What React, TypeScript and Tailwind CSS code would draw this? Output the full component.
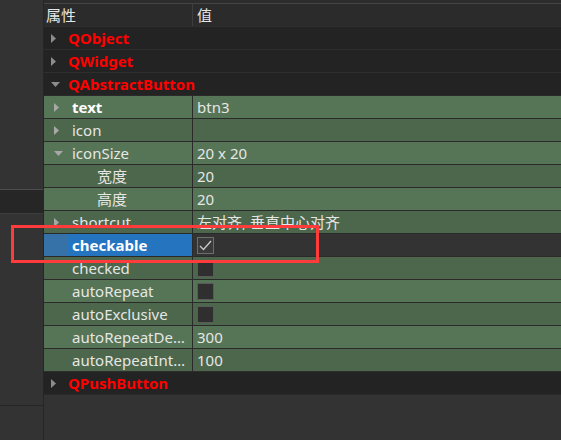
import React from "react";

type Row = {
  name: string;
  cat?: boolean;
  arrow?: "right" | "down";
  bold?: boolean;
  sub?: boolean;
  value?: string;
  check?: boolean;
  selected?: boolean;
};

const rows: Row[] = [
  { name: "QObject", cat: true, arrow: "right" },
  { name: "QWidget", cat: true, arrow: "right" },
  { name: "QAbstractButton", cat: true, arrow: "down" },
  { name: "text", arrow: "right", bold: true, value: "btn3" },
  { name: "icon", arrow: "right", value: "" },
  { name: "iconSize", arrow: "down", value: "20 x 20" },
  { name: "宽度", sub: true, value: "20" },
  { name: "高度", sub: true, value: "20" },
  { name: "shortcut", arrow: "right", value: "左对齐, 垂直中心对齐" },
  { name: "checkable", bold: true, check: true, selected: true },
  { name: "checked", check: false },
  { name: "autoRepeat", check: false },
  { name: "autoExclusive", check: false },
  { name: "autoRepeatDelay", value: "300" },
  { name: "autoRepeatInterval", value: "100" },
  { name: "QPushButton", cat: true, arrow: "right" },
];

function Arrow({ dir, color }: { dir: "right" | "down"; color: string }) {
  if (dir === "down") {
    return (
      <svg width="9" height="5" viewBox="0 0 9 5">
        <path d="M0 0 L9 0 L4.5 5 Z" fill={color} />
      </svg>
    );
  }
  return (
    <svg width="5" height="9" viewBox="0 0 5 9">
      <path d="M0 0 L5 4.5 L0 9 Z" fill={color} />
    </svg>
  );
}

function CheckBox({ on }: { on: boolean }) {
  return (
    <div
      className={
        on
          ? "flex h-[17px] w-[17px] items-center justify-center border border-[#6e6e6e] bg-[#3a3a3a]"
          : "h-[17px] w-[17px] border border-[#5a5a5a] bg-[#2f2f2f]"
      }
    >
      {on && (
        <svg width="13" height="11" viewBox="0 0 13 11">
          <path d="M1 6 L4.5 9.5 L12 1" stroke="#c8c8c8" strokeWidth="1.4" fill="none" />
        </svg>
      )}
    </div>
  );
}

export default function App() {
  let green = 0;
  return (
    <div
      className="relative flex h-[440px] w-[561px] overflow-hidden bg-[#333333] text-[15px] text-[#e6e6e6]"
      style={{ fontFamily: '"Noto Sans", "Noto Sans CJK SC", sans-serif' }}
    >
      {/* left dock strip */}
      <div className="flex w-[44px] shrink-0 flex-col border-r border-[#262626]">
        <div className="h-[189px] bg-[#333333]" />
        <div className="h-[25px] border-y border-t-[#4c4c4c] border-b-[#3c3c3c] bg-[#262626]" />
        <div className="h-[192px] border-b border-[#262626] bg-[#333333]" />
        <div className="flex-1 bg-[#333333]" />
      </div>

      {/* property table */}
      <div className="flex flex-1 flex-col">
        <div className="h-[4px] border-b border-[#444444] bg-[#2c2c2c]" />
        <div className="flex h-[22px] items-center bg-[#2b2b2b] leading-none">
          <div className="flex h-full w-[149px] items-center border-r border-[#3e3e3e] pl-[2px]">属性</div>
          <div className="pl-[4px]">值</div>
        </div>

        {rows.map((r, i) => {
          if (r.cat) {
            return (
              <div key={i} className="flex h-[23px] items-center border-t border-[#2e2e2e] bg-[#232323]">
                <div className="flex w-[24px] items-center pl-[7px]">
                  <Arrow dir={r.arrow!} color="#8c8c8c" />
                </div>
                <span className="font-bold text-[#ff0000]">{r.name}</span>
              </div>
            );
          }
          const light = green % 2 === 0;
          green++;
          const bg = light ? "bg-[#567556]" : "bg-[#4c674c]";
          return (
            <div key={i} className={`flex h-[23px] border-t border-[#2a2a2a] ${r.selected ? "" : bg}`}>
              <div
                className={`flex w-[149px] shrink-0 items-center border-r border-[#2a2a2a] ${
                  r.selected ? "bg-[#2574c0]" : ""
                }`}
              >
                <div
                  className={`flex h-full w-[24px] shrink-0 items-center pl-[10px] ${
                    r.selected ? "bg-[#3671a8]" : ""
                  }`}
                >
                  {r.arrow && <Arrow dir={r.arrow} color="#a8a8a8" />}
                </div>
                <span
                  className={`truncate pl-[4px] pr-[4px] ${r.sub ? "pl-[29px]" : ""} ${
                    r.bold ? "font-bold text-white" : ""
                  }`}
                >
                  {r.name}
                </span>
              </div>
              <div
                className={`flex flex-1 items-center pl-[4px] ${r.selected ? "bg-[#333333]" : ""}`}
              >
                {r.check !== undefined ? <CheckBox on={r.check} /> : <span className="whitespace-nowrap">{r.value}</span>}
              </div>
            </div>
          );
        })}
        <div className="flex-1 border-t border-[#2a2a2a] bg-[#333333]" />
      </div>

      {/* annotation box */}
      <div className="absolute left-[11px] top-[225px] h-[38px] w-[308px] border-[3px] border-[#ff3b3b]" />
    </div>
  );
}
